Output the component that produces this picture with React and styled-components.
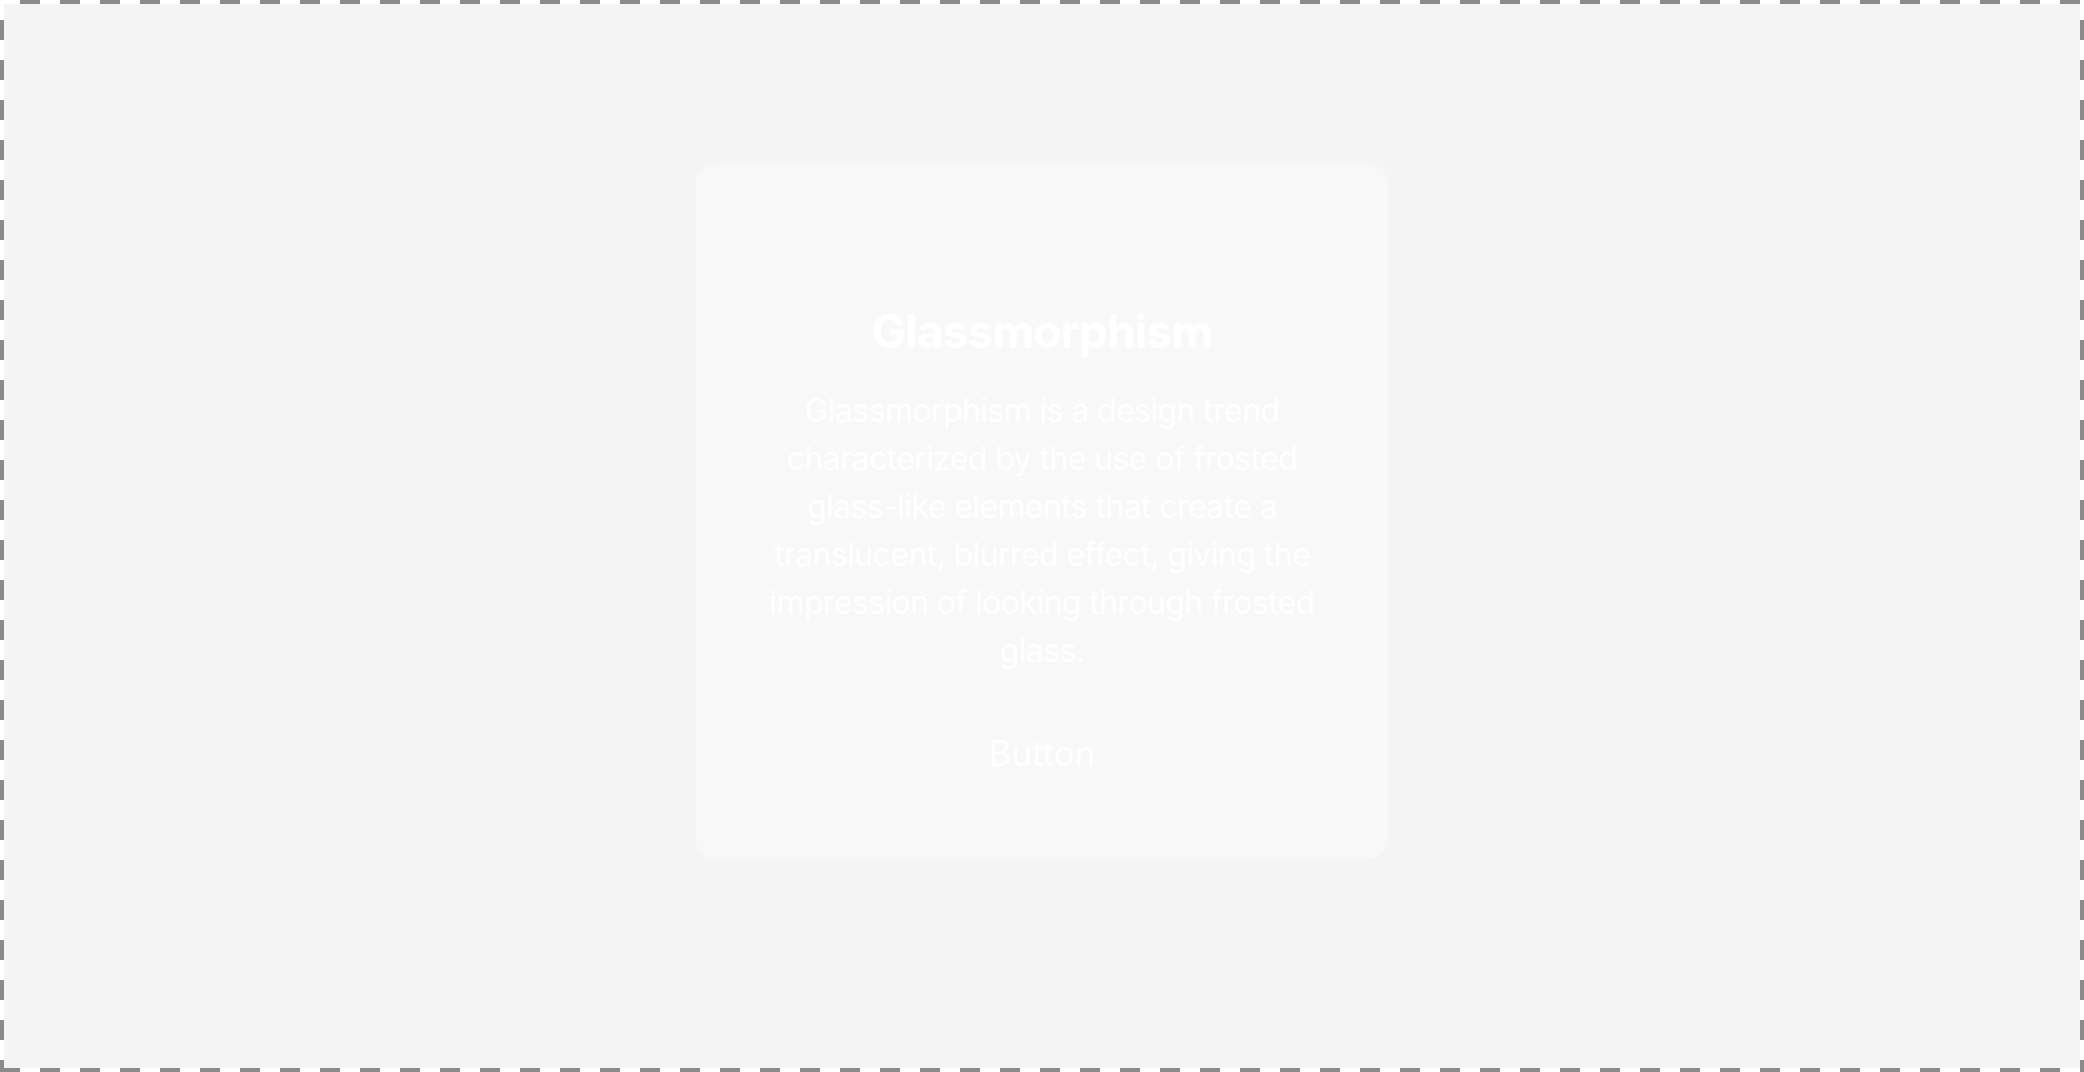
import React from "react";
import styled, { createGlobalStyle } from "styled-components";

const GlobalStyle = createGlobalStyle`
  html, body {
    margin: 0;
    padding: 0;
    background: #ffffff;
  }
  body {
    font-family: Inter, "Noto Sans", "Liberation Sans", sans-serif;
  }
  * {
    box-sizing: border-box;
  }
`;

const dash = "#8a8a8a";

const Frame = styled.div`
  width: 2084px;
  height: 1072px;
  padding: 4px;
  background:
    linear-gradient(90deg, transparent 50%, ${dash} 50%) 0 0 / 40px 4px repeat-x,
    linear-gradient(90deg, ${dash} 50%, transparent 50%) 0 100% / 40px 4px repeat-x,
    linear-gradient(180deg, transparent 50%, ${dash} 50%) 0 0 / 4px 40px repeat-y,
    linear-gradient(180deg, transparent 50%, ${dash} 50%) 100% 0 / 4px 40px repeat-y,
    #ffffff;
`;

const Stage = styled.main`
  height: 100%;
  background: #f4f4f4;
  display: flex;
  justify-content: center;
  align-items: flex-start;
  padding-top: 160px;
`;

const GlassCard = styled.section`
  width: 692px;
  padding: 139px 54px 85px;
  border-radius: 20px;
  background: rgba(255, 255, 255, 0.4);
  display: flex;
  flex-direction: column;
  align-items: center;
  text-align: center;
  color: #ffffff;
`;

const Title = styled.h2`
  margin: 0;
  font-size: 46px;
  line-height: 56px;
  font-weight: 700;
  letter-spacing: -0.9px;
`;

const Body = styled.p`
  margin: 28px 0 0;
  font-size: 32px;
  line-height: 48px;
  font-weight: 400;
  letter-spacing: -0.6px;
`;

const GhostButton = styled.button`
  margin-top: 57px;
  padding: 0;
  border: none;
  background: transparent;
  color: #ffffff;
  font-family: inherit;
  font-size: 35px;
  line-height: 42px;
  font-weight: 400;
  cursor: pointer;
`;

export default function App() {
  return (
    <>
      <GlobalStyle />
      <Frame>
        <Stage>
          <GlassCard>
            <Title>Glassmorphism</Title>
            <Body>
              Glassmorphism is a design trend characterized by the use of
              frosted glass-like elements that create a translucent, blurred
              effect, giving the impression of looking through frosted glass.
            </Body>
            <GhostButton>Button</GhostButton>
          </GlassCard>
        </Stage>
      </Frame>
    </>
  );
}
